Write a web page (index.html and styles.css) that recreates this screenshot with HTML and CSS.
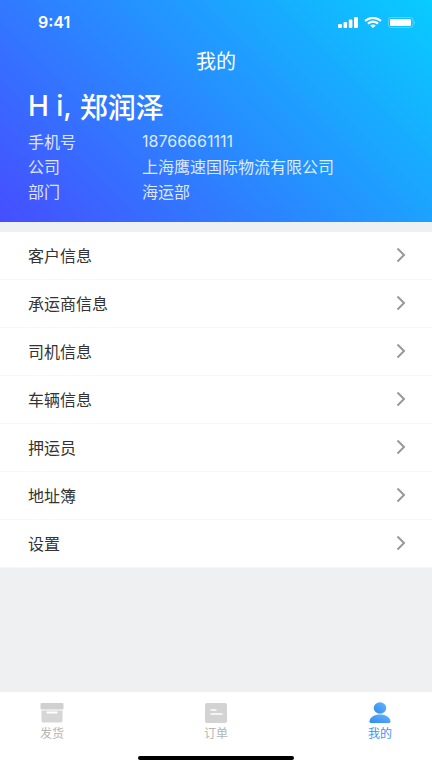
FILE: index.html
```html
<!DOCTYPE html>
<html lang="zh-CN">
<head>
<meta charset="utf-8">
<meta name="viewport" content="width=device-width, initial-scale=1">
<title>我的</title>
<link rel="stylesheet" href="styles.css">
</head>
<body>
<header class="hero">
  <div class="status">
    <span class="clock">9:41</span>
    <div class="status-icons">
      <svg width="20" height="11" viewBox="0 0 20 11" fill="#fff" aria-hidden="true">
        <rect x="0" y="7" width="4" height="4" rx="1"/>
        <rect x="5.5" y="5" width="3.6" height="6" rx="1"/>
        <rect x="10.8" y="2.6" width="3.6" height="8.4" rx="1"/>
        <rect x="16" y="0" width="4" height="11" rx="1"/>
      </svg>
      <svg width="18" height="11" viewBox="0 0 18 11" aria-hidden="true">
        <path d="M1 3.9Q9-2.2 17 3.9M3.9 6.6Q9 2.7 14.1 6.6" fill="none" stroke="#fff" stroke-width="2"/>
        <path d="M6.2 8.5Q9 6.6 11.8 8.5L9 11z" fill="#fff"/>
      </svg>
      <svg width="28" height="11" viewBox="0 0 28 11" aria-hidden="true">
        <rect x=".5" y=".5" width="24.5" height="10" rx="2.5" fill="none" stroke="#fff" stroke-opacity=".3"/>
        <rect x="2" y="2" width="21" height="7" rx="1.2" fill="#fff"/>
        <path d="M26.3 3.7q1.6 1.8 0 3.6z" fill="#fff" fill-opacity=".4"/>
      </svg>
    </div>
  </div>
  <h1 class="title">我的</h1>
  <h2 class="greeting"><span class="hi">H i,</span>郑润泽</h2>
  <dl class="profile">
    <dt>手机号</dt><dd class="phone">18766661111</dd>
    <dt>公司</dt><dd>上海鹰速国际物流有限公司</dd>
    <dt>部门</dt><dd>海运部</dd>
  </dl>
</header>
<main class="content">
  <nav class="menu" aria-label="信息">
    <a class="item" href="#customer">客户信息<svg class="chevron" viewBox="0 0 8 14"><path d="M.5.5L7 7 .5 13.500"/></svg></a>
    <a class="item" href="#carrier">承运商信息<svg class="chevron" viewBox="0 0 8 14"><path d="M.5.5L7 7 .5 13.500"/></svg></a>
    <a class="item" href="#driver">司机信息<svg class="chevron" viewBox="0 0 8 14"><path d="M.5.5L7 7 .5 13.500"/></svg></a>
    <a class="item" href="#vehicle">车辆信息<svg class="chevron" viewBox="0 0 8 14"><path d="M.5.5L7 7 .5 13.500"/></svg></a>
    <a class="item" href="#escort">押运员<svg class="chevron" viewBox="0 0 8 14"><path d="M.5.5L7 7 .5 13.500"/></svg></a>
    <a class="item" href="#address">地址簿<svg class="chevron" viewBox="0 0 8 14"><path d="M.5.5L7 7 .5 13.500"/></svg></a>
    <a class="item" href="#settings">设置<svg class="chevron" viewBox="0 0 8 14"><path d="M.5.5L7 7 .5 13.500"/></svg></a>
  </nav>
</main>
<footer class="footer">
  <nav class="tabs" aria-label="主导航">
    <a class="tab" href="#ship">
      <svg width="24" height="22" viewBox="0 0 24 22" aria-hidden="true">
        <rect x=".5" y="1" width="23" height="6.5" rx="1" fill="#d0d0d0"/>
        <path d="M1.500 8.500h21V19a1.500 1.500 0 0 1-1.500 1.500H3A1.500 1.500 0 0 1 1.500 19z" fill="#d6d6d6"/>
        <rect x="6.500" y="9.500" width="11" height="2" rx=".8" fill="#fff"/>
      </svg>
      发货
    </a>
    <a class="tab" href="#orders">
      <svg width="24" height="22" viewBox="0 0 24 22" aria-hidden="true">
        <rect x="1" y="1" width="22" height="20" rx="2" fill="#d3d3d3"/>
        <path d="M6.500 8h6M6.500 12h12" stroke="#fff" stroke-width="1.600"/>
      </svg>
      订单
    </a>
    <a class="tab active" href="#mine" aria-current="page">
      <svg width="24" height="22" viewBox="0 0 24 22" aria-hidden="true">
        <defs><linearGradient id="person" x1="1" y1="0" x2="0" y2="1"><stop offset="0" stop-color="#69b5fa"/><stop offset="1" stop-color="#2d8af0"/></linearGradient></defs>
        <ellipse cx="12" cy="6" rx="6.300" ry="5.700" fill="url(#person)"/>
        <path d="M1.500 19.200C2.500 15 6 12.600 12 12.600S21.500 15 22.500 19.200Q22.700 21 21 21H3Q1.300 21 1.500 19.200z" fill="url(#person)"/>
      </svg>
      我的
    </a>
  </nav>
  <div class="home-bar"></div>
</footer>
</body>
</html>
```

FILE: styles.css
```css
* {
  box-sizing: border-box;
}

body {
  margin: 0;
  min-height: 100vh;
  display: flex;
  flex-direction: column;
  background: #eff0f2;
  color: #333;
  font-family: "Noto Sans CJK SC", sans-serif;
  font-size: 16px;
}

a {
  color: inherit;
  text-decoration: none;
}

.hero {
  padding: 12px 28px 18px;
  background: linear-gradient(45deg, #464eff 0%, #2a87ff 45%, #08ccff 100%);
  color: #fff;
}

.status {
  display: flex;
  align-items: center;
  justify-content: space-between;
  height: 20px;
  padding-left: 10px;
  margin-right: -12px;
}

.clock {
  font: 600 16px/20px Inter, sans-serif;
}

.status-icons {
  display: flex;
  gap: 6px;
}

.title {
  margin: 14px 0 0;
  font-size: 20px;
  font-weight: 400;
  line-height: 30px;
  text-align: center;
}

.greeting {
  display: flex;
  align-items: center;
  gap: 8px;
  margin: 11px 0 4px;
  font-size: 28px;
  font-weight: 500;
  line-height: 38px;
}

.hi {
  font-family: Inter, sans-serif;
  font-weight: 500;
}

.profile {
  display: grid;
  grid-template-columns: 114px 1fr;
  margin: 0;
  line-height: 25px;
  color: rgba(255, 255, 255, 0.85);
}

.profile dd {
  margin: 0;
}

.phone {
  font-family: Inter, sans-serif;
}

.content {
  flex: 1;
  padding: 10px 0;
}

.menu {
  background: #fff;
}

.item {
  display: flex;
  align-items: center;
  justify-content: space-between;
  height: 48px;
  padding: 0 27px 1px 28px;
  border-bottom: 1px solid #f7f7f7;
}

.chevron {
  width: 8px;
  height: 14px;
  fill: none;
  stroke: #999;
  stroke-width: 2;
  overflow: visible;
}

.footer {
  background: #fff;
  padding: 10px 0 8px;
}

.tabs {
  display: flex;
  justify-content: space-between;
  padding: 0 32px;
}

.tab {
  display: flex;
  flex-direction: column;
  align-items: center;
  width: 40px;
  color: #b5b5b5;
  font-size: 12px;
  line-height: 18px;
}

.active {
  color: #3d95f5;
}

.home-bar {
  width: 36%;
  height: 4px;
  margin: 14px auto 0;
  border-radius: 2px;
  background: #000;
}
```
